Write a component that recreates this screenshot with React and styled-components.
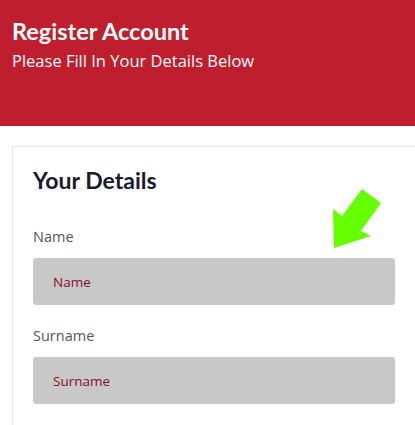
import React from 'react';
import styled, { createGlobalStyle } from 'styled-components';

const GlobalStyle = createGlobalStyle`
    html, body {
        margin: 0;
        padding: 0;
        background: #fff;
        overflow: hidden;
    }
    * {
        box-sizing: border-box;
    }
`;

const Header = styled.header`
    height: 126px;
    padding: 16px 12px 0;
    background-color: #be1e2d;
    color: #fff;
`;

const Title = styled.h1`
    margin: 0;
    font-family: Lato, sans-serif;
    font-weight: 700;
    font-size: 23.5px;
    line-height: 30px;
`;

const Subtitle = styled.p`
    margin: 4px 0 0;
    font-family: "Open Sans", sans-serif;
    font-size: 16.5px;
    line-height: 22px;
`;

const Card = styled.section`
    position: relative;
    margin: 20px 0 0 12px;
    width: 404px;
    padding: 19px 20px 20px;
    border: 1px solid #e6e6e6;
    border-right: none;
`;

const CardTitle = styled.h2`
    margin: 0 0 34px;
    font-family: Lato, sans-serif;
    font-weight: 700;
    font-size: 23px;
    line-height: 28px;
    color: #1a1a2e;
`;

const Field = styled.div`
    display: flex;
    flex-direction: column;
    gap: 12px;
    margin-bottom: 22px;
`;

const Label = styled.label`
    font-family: "Open Sans", sans-serif;
    font-size: 14.5px;
    line-height: 18px;
    color: #555;
`;

const Input = styled.input`
    height: 47px;
    width: 362px;
    padding: 0 20px;
    border: none;
    border-radius: 3px;
    background-color: #c8c8c8;
    font-family: "Open Sans", sans-serif;
    font-size: 13.5px;
    color: #8b0a2e;
    outline: none;

    &::placeholder {
        color: #8b0a2e;
    }
`;

const Arrow = styled.svg`
    position: absolute;
    left: 307px;
    top: 33px;
`;

export default function App() {
    return (
        <>
            <GlobalStyle/>
            <Header>
                <Title>Register Account</Title>
                <Subtitle>Please Fill In Your Details Below</Subtitle>
            </Header>
            <Card>
                <CardTitle>Your Details</CardTitle>
                <Field>
                    <Label>Name</Label>
                    <Input placeholder="Name"/>
                </Field>
                <Field>
                    <Label>Surname</Label>
                    <Input placeholder="Surname"/>
                </Field>
                <Arrow width="70" height="70" viewBox="320 180 70 70">
                    <polygon
                        points="334,248 333,209 342,216 362,189 381,203 361,231 371,236"
                        fill="#66ff00"
                    />
                </Arrow>
            </Card>
        </>
    );
}
